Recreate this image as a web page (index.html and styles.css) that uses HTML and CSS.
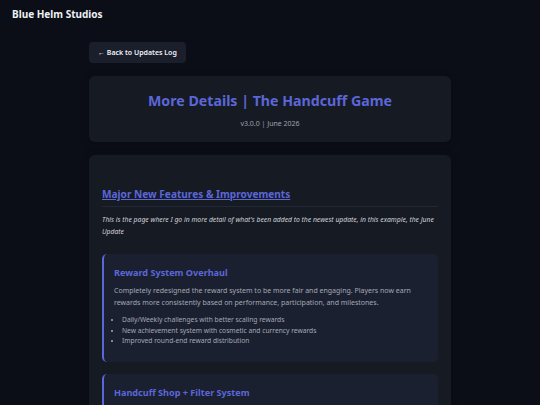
FILE: index.html
```
<!DOCTYPE html>
<html lang="en">
<head>
    <meta charset="UTF-8">
    <meta name="viewport" content="width=device-width, initial-scale=1.0">
    <title>More Details | The Handcuff Game</title>
    <link rel="stylesheet" href="styles.css">
</head>
<body>
    <header class="site-header">
        <span class="brand">Blue Helm Studios</span>
    </header>

    <main class="page">
        <nav class="page-nav">
            <a class="back-button" href="#">&larr; Back to Updates Log</a>
        </nav>

        <section class="card title-card">
            <h1 class="page-title">More Details | The Handcuff Game</h1>
            <p class="page-meta">v3.0.0 | June 2026</p>
        </section>

        <section class="card content-card">
            <h2 class="section-title"><a href="#">Major New Features &amp; Improvements</a></h2>
            <p class="intro">This is the page where I go in more detail of what's been added to the newest update, in this example, the June Update</p>

            <div class="feature">
                <h3 class="feature-title">Reward System Overhaul</h3>
                <p class="feature-text">Completely redesigned the reward system to be more fair and engaging. Players now earn rewards more consistently based on performance, participation, and milestones.</p>
                <ul class="feature-list">
                    <li>Daily/Weekly challenges with better scaling rewards</li>
                    <li>New achievement system with cosmetic and currency rewards</li>
                    <li>Improved round-end reward distribution</li>
                </ul>
            </div>

            <div class="feature">
                <h3 class="feature-title">Handcuff Shop + Filter System</h3>
                <p class="feature-text">Browse the shop with new filters for rarity, price and type, and preview handcuffs before you buy them.</p>
                <ul class="feature-list">
                    <li>Filter by rarity, price and collection</li>
                    <li>Live preview of equipped handcuffs</li>
                </ul>
            </div>
        </section>
    </main>
</body>
</html>
```

FILE: styles.css
```
* {
    margin: 0;
    padding: 0;
    box-sizing: border-box;
}

body {
    font-family: "Noto Sans", "Open Sans", sans-serif;
    background: #0b0e17;
    color: #d6d9e0;
    min-height: 100vh;
}

.site-header {
    padding: 7px 12px;
    font-size: 10px;
    line-height: 14px;
}

.brand {
    font-weight: 700;
    color: #eef0f4;
}

.page {
    max-width: 362px;
    margin: 0 auto;
    padding-top: 14px;
}

.page-nav {
    display: flex;
    margin-bottom: 13px;
}

.back-button {
    display: block;
    background: #1a1f2b;
    color: #f1f3f7;
    text-decoration: none;
    font-size: 7px;
    line-height: 9px;
    font-weight: 600;
    padding: 6px 9px;
    border-radius: 4px;
}

.card {
    background: #161a23;
    border-radius: 6px;
    margin-bottom: 13px;
    box-shadow: 0 2px 8px rgba(0, 0, 0, 0.25);
}

.title-card {
    text-align: center;
    padding: 15px 13px 14px;
}

.page-title {
    font-size: 14.2px;
    font-weight: 700;
    color: #5b67d9;
    margin-bottom: 9px;
}

.page-meta {
    font-size: 7px;
    color: #9ca2ae;
}

.content-card {
    padding: 32px 13px 13px;
}

.section-title {
    font-size: 10.1px;
    font-weight: 700;
    padding-bottom: 5px;
    border-bottom: 1px solid #232836;
    margin-bottom: 7px;
}

.section-title a {
    color: #5b67d9;
}

.intro {
    font-size: 6.8px;
    font-style: italic;
    line-height: 12px;
    color: #d0d3da;
    margin-bottom: 16px;
}

.feature {
    background: #1b2030;
    border-left: 2px solid #5b67d9;
    border-radius: 5px;
    padding: 12px 12px 15px 10px;
    margin-bottom: 12px;
}

.feature-title {
    font-size: 9.1px;
    font-weight: 700;
    color: #5b67d9;
    margin-bottom: 6px;
}

.feature-text {
    font-size: 7px;
    line-height: 12px;
    color: #a3a8b4;
    margin-bottom: 6px;
}

.feature-list {
    list-style: disc;
    padding-left: 8px;
    font-size: 6.7px;
    line-height: 10.5px;
    color: #a3a8b4;
}
```
